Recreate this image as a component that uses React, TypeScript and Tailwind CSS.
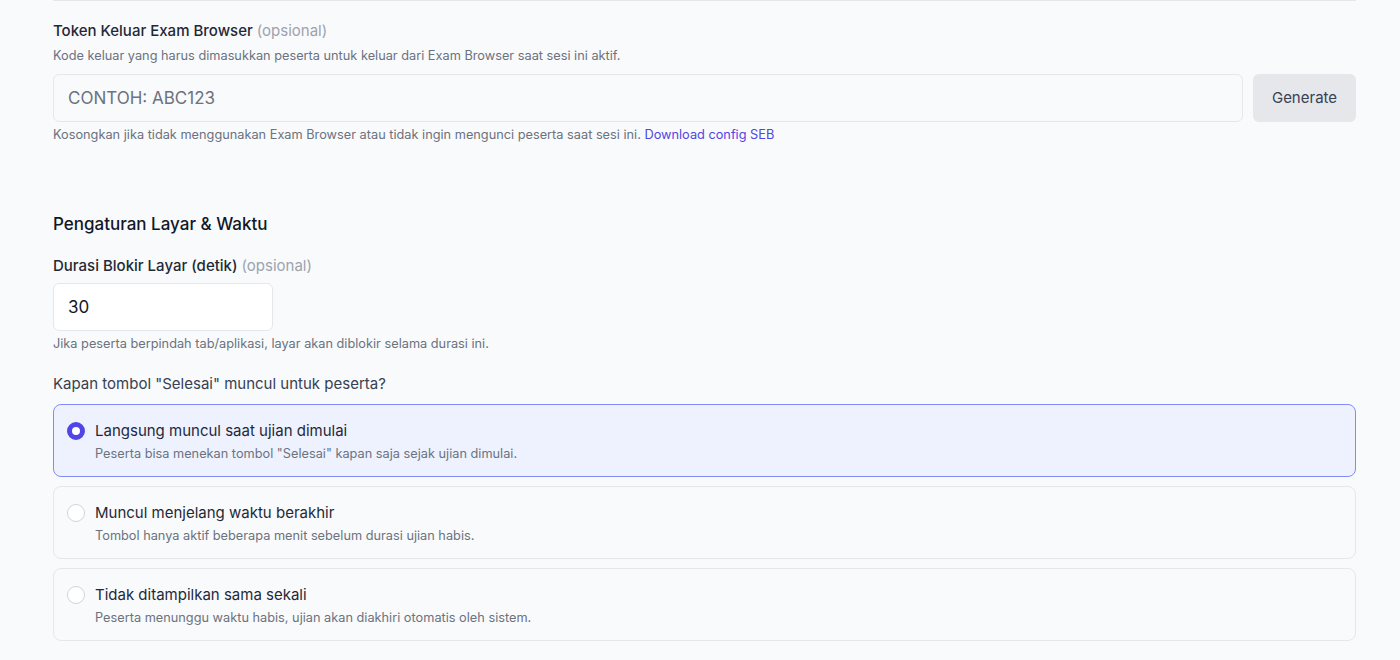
import { useState } from "react";

type FinishOption = {
  id: string;
  title: string;
  hint: string;
};

const finishOptions: FinishOption[] = [
  {
    id: "immediate",
    title: "Langsung muncul saat ujian dimulai",
    hint: 'Peserta bisa menekan tombol "Selesai" kapan saja sejak ujian dimulai.',
  },
  {
    id: "near_end",
    title: "Muncul menjelang waktu berakhir",
    hint: "Tombol hanya aktif beberapa menit sebelum durasi ujian habis.",
  },
  {
    id: "hidden",
    title: "Tidak ditampilkan sama sekali",
    hint: "Peserta menunggu waktu habis, ujian akan diakhiri otomatis oleh sistem.",
  },
];

export default function App() {
  const [token, setToken] = useState("");
  const [blockSeconds, setBlockSeconds] = useState("30");
  const [finishMode, setFinishMode] = useState("immediate");

  return (
    <div className="min-h-screen bg-[#f9fafb] font-['Inter',sans-serif] text-[#1f2937]">
      <div className="ml-[53px] mr-[44px] border-t border-[#e5e7eb] pt-[20px] pb-[20px]">
        {/* Exit token */}
        <label className="block text-[15px] font-medium leading-[20px] text-[#1f2937]">
          Token Keluar Exam Browser{" "}
          <span className="font-normal text-[#9ca3af]">(opsional)</span>
        </label>
        <p className="mt-[6px] text-[12.75px] leading-[18px] text-[#6b7280]">
          Kode keluar yang harus dimasukkan peserta untuk keluar dari Exam Browser saat sesi ini aktif.
        </p>
        <div className="mt-[9px] flex gap-[10px]">
          <input
            value={token}
            onChange={(e) => setToken(e.target.value.toUpperCase())}
            placeholder="CONTOH: ABC123"
            className="h-[48px] flex-1 rounded-[6px] border border-[#e5e7eb] bg-[#f9fafb] px-[14px] text-[17px] text-[#1f2937] outline-none placeholder:text-[#6b7280]"
          />
          <button
            type="button"
            className="h-[48px] w-[103px] rounded-[6px] bg-[#e5e7eb] text-[15px] text-[#374151]"
          >
            Generate
          </button>
        </div>
        <p className="mt-[4px] text-[12.75px] leading-[18px] text-[#6b7280]">
          Kosongkan jika tidak menggunakan Exam Browser atau tidak ingin mengunci peserta saat sesi ini.{" "}
          <a href="#" className="text-[#4f46e5]">
            Download config SEB
          </a>
        </p>

        {/* Screen & time settings */}
        <h3 className="mt-[68px] text-[17px] font-medium leading-[24px] text-[#111827]">
          Pengaturan Layar &amp; Waktu
        </h3>

        <label className="mt-[20px] block text-[15px] font-medium leading-[20px] text-[#1f2937]">
          Durasi Blokir Layar (detik){" "}
          <span className="font-normal text-[#9ca3af]">(opsional)</span>
        </label>
        <input
          value={blockSeconds}
          onChange={(e) => setBlockSeconds(e.target.value)}
          className="mt-[7px] block h-[48px] w-[220px] rounded-[6px] border border-[#e5e7eb] bg-white px-[14px] text-[17px] text-[#111827] outline-none"
        />
        <p className="mt-[4px] text-[12.75px] leading-[18px] text-[#6b7280]">
          Jika peserta berpindah tab/aplikasi, layar akan diblokir selama durasi ini.
        </p>

        <p className="mt-[21px] text-[15px] leading-[20px] text-[#374151]">
          Kapan tombol "Selesai" muncul untuk peserta?
        </p>

        <div className="mt-[10px] flex flex-col gap-[9px]">
          {finishOptions.map((opt) => {
            const active = finishMode === opt.id;
            return (
              <button
                key={opt.id}
                type="button"
                onClick={() => setFinishMode(opt.id)}
                className={
                  active
                    ? "flex h-[73px] items-start gap-[10px] rounded-[8px] border border-[#818cf8] bg-[#eef2ff] px-[13px] pt-[16px] text-left"
                    : "flex h-[73px] items-start gap-[10px] rounded-[8px] border border-[#e5e7eb] bg-[#f9fafb] px-[13px] pt-[16px] text-left"
                }
              >
                <span
                  className={
                    active
                      ? "mt-[1px] h-[18px] w-[18px] shrink-0 rounded-full border-[5px] border-[#4f46e5] bg-white"
                      : "mt-[1px] h-[18px] w-[18px] shrink-0 rounded-full border border-[#d1d5db] bg-white"
                  }
                />
                <span className="flex flex-col">
                  <span className="text-[15px] leading-[20px] text-[#1f2937]">{opt.title}</span>
                  <span className="mt-[4px] text-[12.75px] leading-[18px] text-[#6b7280]">{opt.hint}</span>
                </span>
              </button>
            );
          })}
        </div>
      </div>
    </div>
  );
}
